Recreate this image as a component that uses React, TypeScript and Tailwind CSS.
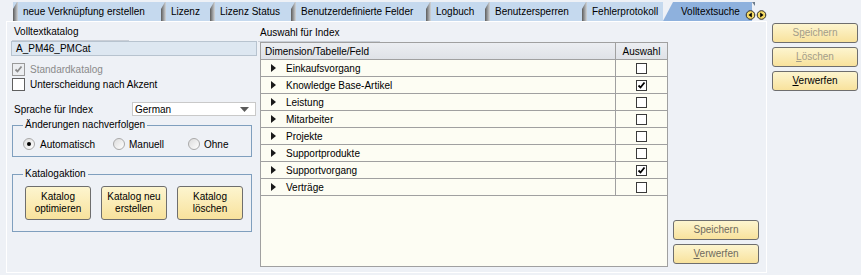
import React from "react";

const tabs = [
  { label: "neue Verknüpfung erstellen", w: "w-[148px]" },
  { label: "Lizenz", w: "w-[49px]" },
  { label: "Lizenz Status", w: "w-[81px]" },
  { label: "Benutzerdefinierte Felder", w: "w-[135px]" },
  { label: "Logbuch", w: "w-[59px]" },
  { label: "Benutzersperren", w: "w-[97px]" },
  { label: "Fehlerprotokoll", w: "w-[81px]" },
];

const rows = [
  { name: "Einkaufsvorgang", on: false },
  { name: "Knowledge Base-Artikel", on: true },
  { name: "Leistung", on: false },
  { name: "Mitarbeiter", on: false },
  { name: "Projekte", on: false },
  { name: "Supportprodukte", on: false },
  { name: "Supportvorgang", on: true },
  { name: "Verträge", on: false },
];

const TabEdge = () => (
  <svg width="5" height="19" className="shrink-0">
    <defs>
      <linearGradient id="tabedge" x1="0" x2="1" y1="0" y2="0">
        <stop offset="0" stopColor="#5c5c5c" />
        <stop offset="1" stopColor="#d2d6da" />
      </linearGradient>
    </defs>
    <polygon points="0,19 0,7 4,0 5,0 5,19" fill="url(#tabedge)" />
  </svg>
);

const Check = ({ color = "#000" }: { color?: string }) => (
  <svg width="9" height="9" viewBox="0 0 9 9">
    <path d="M1.5 4.5 L3.5 6.5 L7.5 1.5" stroke={color} strokeWidth="1.8" fill="none" />
  </svg>
);

const Btn = ({
  children,
  className,
  muted,
}: {
  children: React.ReactNode;
  className: string;
  muted?: string;
}) => (
  <div
    className={`flex items-center justify-center text-center leading-[12px] rounded-[3px] border border-[#6e6e6e] bg-linear-to-b from-[#fdf5cf] to-[#f8e29c] ${muted ?? "text-black"} ${className}`}
  >
    {children}
  </div>
);

const Radio = ({ on }: { on?: boolean }) => (
  <div className="w-[12px] h-[12px] rounded-full border border-[#a9a9a9] bg-linear-to-br from-[#dcdcdc] to-white flex items-center justify-center shrink-0">
    {on && <div className="w-[4px] h-[4px] rounded-full bg-black" />}
  </div>
);

export default function App() {
  return (
    <div className="relative w-[861px] h-[275px] overflow-hidden bg-[#eef1f6] font-['Liberation_Sans',Arial,sans-serif] text-[10px] text-black">
      {/* tab strip */}
      <div className="h-[21px] flex items-start pt-[2px] pl-[13px]">
        {tabs.map((t) => (
          <div key={t.label} className={`flex items-center h-[19px] bg-[#c5d9ee] ${t.w}`}>
            <TabEdge />
            <span className="pl-[5px] whitespace-nowrap">{t.label}</span>
          </div>
        ))}
        <div className="flex items-center h-[19px] w-[89px] bg-[#8eb1dd] pl-[18px] [clip-path:polygon(10px_0,100%_0,100%_100%,0_100%)]">
          <span className="whitespace-nowrap">Volltextsuche</span>
        </div>
      </div>
      <svg width="24" height="12" className="absolute left-[744px] top-[2px]">
        <polygon points="8,0 11,0 11,4" fill="#6a7a8a" />
      </svg>
      <svg width="24" height="12" className="absolute left-[745px] top-[9px]">
        <circle cx="5.5" cy="6" r="4.3" fill="#f3d966" stroke="#2b2b2b" strokeWidth="1" />
        <polygon points="3.5,6 6.8,3.6 6.8,8.4" fill="#000" />
        <circle cx="16.5" cy="6" r="4.3" fill="#f3d966" stroke="#2b2b2b" strokeWidth="1" />
        <polygon points="18.5,6 15.2,3.6 15.2,8.4" fill="#000" />
      </svg>

      <div className="flex">
        {/* main panel */}
        <div className="ml-[6px] w-[761px] h-[252px] border border-white flex">
          {/* left column */}
          <div className="ml-[4px] w-[246px] flex flex-col">
            <div className="h-[19px] w-[117px] ml-[1px] pl-[2px] pb-[1px] flex items-end border-b border-[#c9ced6]">
              Volltextkatalog
            </div>
            <div className="h-[15px] w-[246px] bg-[#dde7f1] border border-[#b7c3cf] pl-[4px] flex items-center">
              A_PM46_PMCat
            </div>
            <div className="mt-[7px] h-[13px] flex items-center ml-[1px]">
              <div className="w-[13px] h-[13px] border border-[#9a9a9a] bg-[#eceef1] flex items-center justify-center">
                <Check color="#8c8c8c" />
              </div>
              <span className="ml-[5px] text-[#8a8a8a]">Standardkatalog</span>
            </div>
            <div className="mt-[2px] h-[13px] flex items-center ml-[1px]">
              <div className="w-[13px] h-[13px] border border-[#5f5f5f] bg-white" />
              <span className="ml-[5px]">Unterscheidung nach Akzent</span>
            </div>
            <div className="mt-[11px] h-[14px] flex items-center">
              <span className="w-[121px] pl-[3px]">Sprache für Index</span>
              <div className="w-[124px] h-[14px] bg-white border border-[#c9c9c9] flex items-center justify-between pl-[2px] pr-[6px]">
                <span>German</span>
                <svg width="9" height="5">
                  <polygon points="0,0 9,0 4.5,5" fill="#5a5a5a" />
                </svg>
              </div>
            </div>
            <div className="relative mt-[9px] ml-[1px] w-[240px] h-[32px] border border-[#7f9fbe]">
              <span className="absolute left-[10px] -top-[8px] px-[2px] bg-[#eef1f6] leading-[14px]">
                Änderungen nachverfolgen
              </span>
              <div className="mt-[12px] pl-[10px] h-[12px] flex items-center">
                <div className="w-[90px] flex items-center">
                  <Radio on />
                  <span className="ml-[5px]">Automatisch</span>
                </div>
                <div className="w-[75px] flex items-center">
                  <Radio />
                  <span className="ml-[4px]">Manuell</span>
                </div>
                <div className="flex items-center">
                  <Radio />
                  <span className="ml-[4px]">Ohne</span>
                </div>
              </div>
            </div>
            <div className="relative mt-[17px] ml-[1px] w-[240px] h-[58px] border border-[#7f9fbe]">
              <span className="absolute left-[10px] -top-[8px] px-[2px] bg-[#eef1f6] leading-[14px]">
                Katalogaktion
              </span>
              <div className="mt-[11px] pl-[12px] flex gap-[10px]">
                <Btn className="w-[66px] h-[34px]">
                  Katalog
                  <br />
                  optimieren
                </Btn>
                <Btn className="w-[66px] h-[34px]">
                  Katalog neu
                  <br />
                  erstellen
                </Btn>
                <Btn className="w-[66px] h-[34px]">
                  Katalog
                  <br />
                  löschen
                </Btn>
              </div>
            </div>
          </div>

          {/* middle column */}
          <div className="ml-[1px] flex flex-col">
            <div className="h-[20px] w-[122px] pl-[2px] pb-[1px] flex items-end border-b border-[#c9ced6]">
              Auswahl für Index
            </div>
            <div className="ml-[2px] w-[408px] h-[225px] border border-[#a0a0a0] bg-[#fdfdf3] flex flex-col">
              <div className="h-[17px] flex border-b border-[#a0a0a0] bg-linear-to-b from-[#eceef2] to-[#dfe2e7]">
                <div className="w-[355px] border-r border-[#a0a0a0] pl-[4px] flex items-center">
                  Dimension/Tabelle/Feld
                </div>
                <div className="flex-1 flex items-center justify-center">Auswahl</div>
              </div>
              {rows.map((r) => (
                <div key={r.name} className="h-[17px] flex border-b border-[#a0a0a0]">
                  <div className="w-[355px] border-r border-[#a0a0a0] flex items-center">
                    <svg width="5" height="8" className="ml-[10px]">
                      <polygon points="0,0 5,4 0,8" fill="#1a1a1a" />
                    </svg>
                    <span className="ml-[10px]">{r.name}</span>
                  </div>
                  <div className="flex-1 flex items-center justify-center">
                    <div className="w-[11px] h-[11px] border border-[#3a3a3a] bg-white flex items-center justify-center">
                      {r.on && <Check />}
                    </div>
                  </div>
                </div>
              ))}
            </div>
          </div>

          {/* bottom right buttons */}
          <div className="ml-[5px] flex flex-col justify-end gap-[4px] pb-[8px]">
            <Btn className="w-[86px] h-[20px]" muted="text-[#6f6a5e]">
              Speichern
            </Btn>
            <Btn className="w-[86px] h-[20px]" muted="text-[#6f6a5e]">
              <span>
                <span className="underline">V</span>erwerfen
              </span>
            </Btn>
          </div>
        </div>

        {/* right column */}
        <div className="ml-[5px] mt-[2px] flex flex-col gap-[4px]">
          <Btn className="w-[86px] h-[20px]" muted="text-[#a39d8a]">
            <span>
              S<span className="underline">p</span>eichern
            </span>
          </Btn>
          <Btn className="w-[86px] h-[20px]" muted="text-[#a39d8a]">
            <span>
              <span className="underline">L</span>öschen
            </span>
          </Btn>
          <Btn className="w-[86px] h-[20px]">
            <span>
              <span className="underline">V</span>erwerfen
            </span>
          </Btn>
        </div>
      </div>
    </div>
  );
}
